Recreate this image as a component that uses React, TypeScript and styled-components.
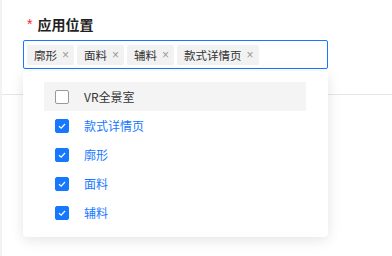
import * as React from 'react'
import styled, { createGlobalStyle } from 'styled-components'

const GlobalStyle = createGlobalStyle`
  html, body {
    margin: 0;
    padding: 0;
    background: #ffffff;
  }
  body {
    font-family: "Noto Sans CJK SC", "Noto Sans", sans-serif;
    width: 392px;
    height: 256px;
    overflow: hidden;
  }
`

const selected = ['廓形', '面料', '辅料', '款式详情页']

const options = [
  { label: 'VR全景室', checked: false, active: true },
  { label: '款式详情页', checked: true },
  { label: '廓形', checked: true },
  { label: '面料', checked: true },
  { label: '辅料', checked: true },
]

const App = () => {
  return (
    <>
      <GlobalStyle />
      <Page>
        <FormItem>
          <Label>
            <Required>*</Required>
            应用位置
          </Label>
          <SelectBox>
            {selected.map((s) => (
              <Tag key={s}>
                {s}
                <TagClose>×</TagClose>
              </Tag>
            ))}
          </SelectBox>
          <Dropdown>
            {options.map((o) => (
              <Option key={o.label} $active={o.active}>
                <Checkbox $checked={o.checked}>
                  {o.checked && (
                    <svg width="10" height="10" viewBox="0 0 10 10">
                      <path d="M2 5.2 L4.2 7.2 L8 3" fill="none" stroke="#fff" strokeWidth="1.2" />
                    </svg>
                  )}
                </Checkbox>
                <OptionText $checked={o.checked}>{o.label}</OptionText>
              </Option>
            ))}
          </Dropdown>
        </FormItem>
        <Divider />
      </Page>
    </>
  )
}

export default App

const Page = styled.div`
  width: 392px;
  height: 256px;
  box-sizing: border-box;
  border-left: 2px solid #f2f2f2;
`

const FormItem = styled.div`
  position: relative;
  padding: 13px 0 0 21px;
`

const Label = styled.div`
  display: flex;
  align-items: center;
  padding-left: 4px;
  height: 22px;
  font-size: 14px;
  font-weight: 700;
  color: #1f1f1f;
`

const Required = styled.span`
  color: #f5222d;
  font-size: 14px;
  font-weight: 400;
  margin-right: 5px;
  font-family: "Liberation Sans", sans-serif;
`

const SelectBox = styled.div`
  margin-top: 5px;
  width: 305px;
  height: 29px;
  box-sizing: border-box;
  border: 1px solid #1677ff;
  border-radius: 2px;
  display: flex;
  align-items: center;
  gap: 3px;
  padding: 0 3px;
`

const Tag = styled.span`
  display: inline-flex;
  align-items: center;
  height: 20px;
  line-height: 20px;
  padding: 0 5px 0 7px;
  background: #f2f2f2;
  border-radius: 2px;
  font-size: 11.5px;
  color: #333;
`

const TagClose = styled.span`
  margin-left: 5px;
  color: #999;
  font-size: 12px;
  line-height: 20px;
  font-family: "Liberation Sans", sans-serif;
`

const Dropdown = styled.div`
  position: absolute;
  top: 71px;
  left: 21px;
  width: 305px;
  box-sizing: border-box;
  padding: 11px 22px 10px 21px;
  background: #fff;
  border-radius: 4px;
  box-shadow: 0 3px 14px rgba(0, 0, 0, 0.11);
  z-index: 2;
`

const Option = styled.div<{ $active?: boolean }>`
  display: flex;
  align-items: center;
  height: 29px;
  padding-left: 11px;
  background: ${(p) => (p.$active ? '#f4f4f4' : 'transparent')};
`

const Checkbox = styled.span<{ $checked?: boolean }>`
  width: 14px;
  height: 14px;
  box-sizing: border-box;
  border-radius: 2px;
  border: 1px solid ${(p) => (p.$checked ? '#1677ff' : '#999')};
  background: ${(p) => (p.$checked ? '#1677ff' : '#fff')};
  display: flex;
  align-items: center;
  justify-content: center;
`

const OptionText = styled.span<{ $checked?: boolean }>`
  margin-left: 15px;
  font-size: 12px;
  color: ${(p) => (p.$checked ? '#1677ff' : '#333')};
`

const Divider = styled.div`
  margin-top: 25px;
  height: 1px;
  background: #e6e6e6;
`
